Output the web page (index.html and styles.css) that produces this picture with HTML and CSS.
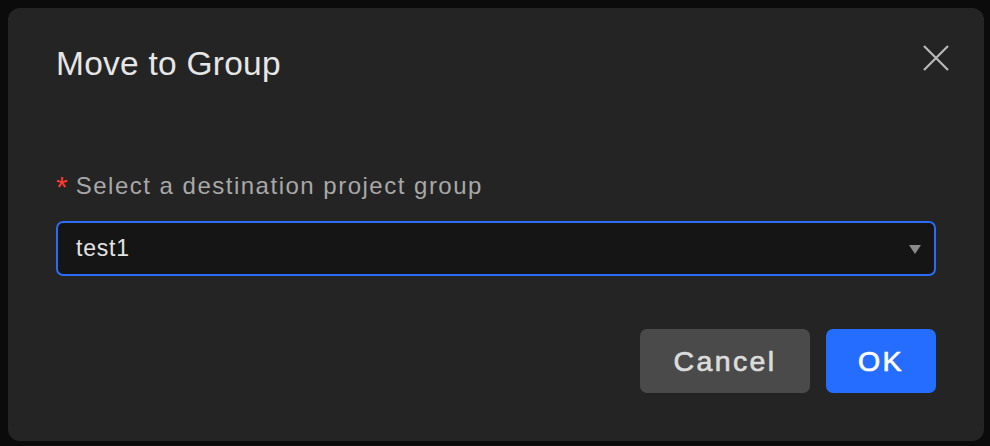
FILE: index.html
```html
<!DOCTYPE html>
<html>
<head>
<meta charset="utf-8">
<link rel="stylesheet" href="styles.css">
</head>
<body>
<div class="dialog">
  <div class="title">Move to Group</div>
  <button class="close" aria-label="Close">
    <svg width="26" height="26" viewBox="0 0 26 26"><path d="M1 1 L25 25 M25 1 L1 25" stroke="#b9b9b9" stroke-width="2.2" fill="none"/></svg>
  </button>
  <div class="label"><span class="req">*</span>Select a destination project group</div>
  <div class="select">
    <span class="value">test1</span>
    <span class="arrow"></span>
  </div>
  <div class="actions">
    <button class="btn cancel">Cancel</button>
    <button class="btn ok">OK</button>
  </div>
</div>
</body>
</html>
```
FILE: styles.css
```css
html, body {
  margin: 0;
  padding: 0;
  background: #0b0b0b;
  width: 990px;
  height: 446px;
  overflow: hidden;
}
body {
  padding: 8px 6px 5px 8px;
  box-sizing: border-box;
  font-family: "Liberation Sans", Arial, sans-serif;
}
.dialog {
  position: relative;
  width: 976px;
  height: 433px;
  box-sizing: border-box;
  background: #242424;
  border-radius: 12px;
  padding: 36px 48px 48px 48px;
  display: flex;
  flex-direction: column;
}
.title {
  color: #e6e6e6;
  font-size: 33.5px;
  line-height: 40px;
  padding-left: 0;
  letter-spacing: 0.25px;
}
.close {
  position: absolute;
  top: 37px;
  right: 35px;
  background: none;
  border: 0;
  padding: 0;
  width: 26px;
  height: 26px;
  display: block;
}
.close svg { display: block; }
.label {
  margin-top: 87px;
  color: #a8a8a8;
  font-size: 24px;
  line-height: 30px;
  padding-left: 0;
  display: flex;
  align-items: center;
  letter-spacing: 1.5px;
}
.req {
  color: #ff3b30;
  font-size: 30px;
  margin-right: 8px;
  letter-spacing: 0;
  position: relative;
  top: 1px;
}
.select {
  margin-top: 20px;
  height: 55px;
  box-sizing: border-box;
  border: 2px solid #2a6cf5;
  border-radius: 7px;
  background: #151515;
  display: flex;
  align-items: center;
  justify-content: space-between;
  padding: 0 13px 0 18px;
}
.value {
  color: #e4e4e4;
  font-size: 23px;
  letter-spacing: 0.8px;
}
.arrow {
  width: 0;
  height: 0;
  border-left: 6.5px solid transparent;
  border-right: 6.5px solid transparent;
  border-top: 9px solid #8a8a8a;
  margin-top: 2px;
}
.actions {
  margin-top: 53px;
  display: flex;
  justify-content: flex-end;
  gap: 16px;
}
.btn {
  height: 64px;
  border: 0;
  border-radius: 7px;
  font-family: "Liberation Sans", Arial, sans-serif;
  font-size: 28.5px;
  font-weight: 400;
  -webkit-text-stroke: 0.7px currentColor;
  letter-spacing: 2.4px;
  padding: 0;
}
.cancel {
  width: 170px;
  background: #4a4a4a;
  color: #dcdcdc;
}
.ok {
  width: 110px;
  background: #246dff;
  color: #ffffff;
}
```
